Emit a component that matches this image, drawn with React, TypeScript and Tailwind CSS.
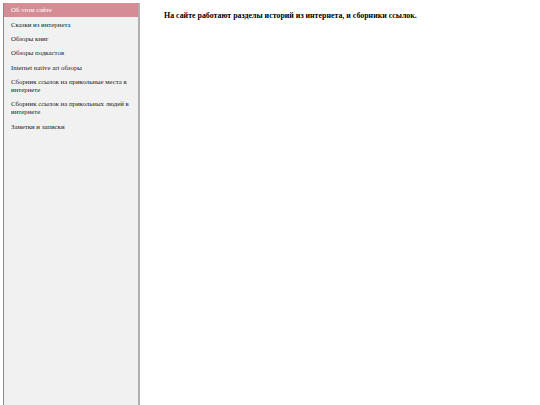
import React from "react";

const items = [
  "Об этом сайте",
  "Сказки из интернета",
  "Обзоры книг",
  "Обзоры подкастов",
  "Internet native art обзоры",
  "Сборник ссылок на прикольные места в интернете",
  "Сборник ссылок на прикольных людей в интернете",
  "Заметки и записки",
];

export default function App() {
  return (
    <div className="flex h-[405px] w-[540px] overflow-hidden bg-white font-['Liberation_Serif',serif]">
      <nav className="mt-[3px] ml-[3px] h-[420px] w-[137px] shrink-0 border-l border-r-2 border-l-[#8a8a8a] border-r-[#b0b0b0] bg-[#f1f1f1]">
        {items.map((item, i) => (
          <div
            key={item}
            className={
              i === 0
                ? "bg-[#d68c95] px-[7px] py-[3.2px] text-[6.8px] leading-[8px] text-white"
                : "px-[7px] py-[3.2px] text-[6.8px] leading-[8px] text-[#222]"
            }
          >
            {item}
          </div>
        ))}
      </nav>
      <main className="pl-[24px] pt-[11px]">
        <h1 className="text-[7.9px] font-bold leading-[10px] text-black">
          На сайте работают разделы историй из интернета, и сборники ссылок.
        </h1>
      </main>
    </div>
  );
}
